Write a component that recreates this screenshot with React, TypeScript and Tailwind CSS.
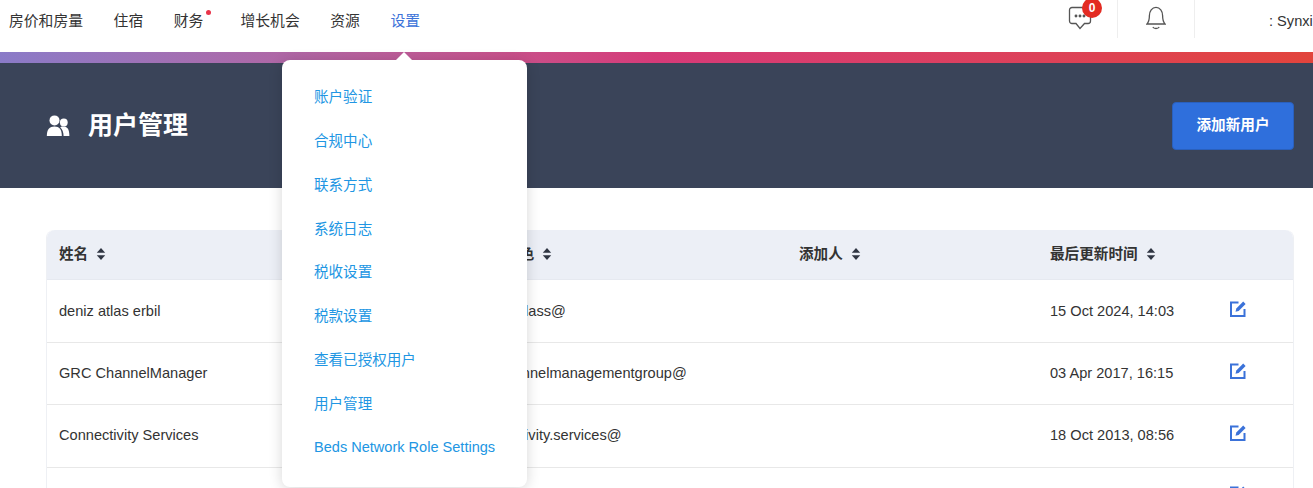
import React from "react";

const font = { fontFamily: '"Liberation Sans", "Noto Sans CJK SC", sans-serif' };

const Sort = () => (
  <svg width="10" height="14" viewBox="0 0 10 14" className="shrink-0 text-[#2f3542]" fill="currentColor">
    <path d="M5 1 L9.2 5.8 H0.8 Z" />
    <path d="M5 13 L9.2 8.2 H0.8 Z" />
  </svg>
);

const Edit = () => (
  <svg width="18" height="18" viewBox="0 0 18 18" fill="none" className="text-[#3b72d9]">
    <path d="M9.5 2.5 H2 V16 H15.5 V9" stroke="currentColor" strokeWidth="2" />
    <path d="M6.5 11.8 L7.3 8.6 L14.2 1.6 L16.6 4 L9.6 11 Z" fill="currentColor" />
  </svg>
);

const Users = () => (
  <svg width="24" height="24" viewBox="0 0 24 24" fill="white">
    <circle cx="8.5" cy="6.4" r="5" />
    <path d="M0.8 22 C0.8 15 3.6 12.4 8.5 12.4 C13.4 12.4 15.8 15 15.8 22 Z" />
    <circle cx="17.8" cy="8.4" r="3.9" />
    <path d="M14.2 13.2 C15.2 12.7 16.4 12.6 17.6 12.6 C21 12.6 23.4 15 23.4 22 H17.6 C17.6 18.4 16.4 15.2 14.2 13.2 Z" />
  </svg>
);

const Chat = () => (
  <svg width="24" height="26" viewBox="0 0 24 26" fill="none" stroke="#555" strokeWidth="1.3">
    <path d="M4 2.5 H20 A2.5 2.5 0 0 1 22.5 5 V16 A2.5 2.5 0 0 1 20 18.5 H16.5 L12 23.5 L8 18.5 H4 A2.5 2.5 0 0 1 1.5 16 V5 A2.5 2.5 0 0 1 4 2.5 Z" />
    <circle cx="8" cy="11" r="0.8" fill="#555" />
    <circle cx="12" cy="11" r="0.8" fill="#555" />
    <circle cx="16" cy="11" r="0.8" fill="#555" />
  </svg>
);

const Bell = () => (
  <svg width="20" height="24" viewBox="0 0 20 24" fill="none" stroke="#555" strokeWidth="1.3">
    <path d="M1 18 C3 16 3.4 14 3.4 9.6 C3.4 5 6 1.4 10 1.4 C14 1.4 16.6 5 16.6 9.6 C16.6 14 17 16 19 18 Z" />
    <path d="M6.8 21 C8 23 12 23 13.2 21" />
  </svg>
);

const navItems = ["房价和房量", "住宿", "财务", "增长机会", "资源", "设置"];
const menu = [
  "账户验证",
  "合规中心",
  "联系方式",
  "系统日志",
  "税收设置",
  "税款设置",
  "查看已授权用户",
  "用户管理",
  "Beds Network Role Settings",
];
const rows = [
  ["deniz atlas erbil", "denizatlass@", "15 Oct 2024, 14:03", "h-[63px]", "pt-[2px]", "pl-[15px]", "-mt-[4px]"],
  ["GRC ChannelManager", "grcchannelmanagementgroup@", "03 Apr 2017, 16:15", "h-[62px]", "", "pl-[15px]", "-mt-[6px]"],
  ["Connectivity Services", "connectivity.services@", "18 Oct 2013, 08:56", "h-[63px]", "", "pl-[11px]", "-mt-[6px]"],
  ["", "", "", "h-[62px]", "", "", "-mt-[10px]"],
];

export default function App() {
  return (
    <div style={font} className="relative h-[488px] w-[1313px] overflow-hidden bg-white text-[14.6px] text-[#333]">
      <header className="flex h-[52px] items-center bg-white">
        <nav className="flex items-center gap-[30.6px] pb-[10px] pl-[9px] text-[14.8px]">
          {navItems.map((n, i) => (
            <span key={n} className={`relative ${i === 5 ? "text-[#3b72d9]" : ""} ${i === 2 ? "mr-[6.5px]" : ""}`}>
              {n}
              {i === 2 && <span className="absolute -right-[8px] top-0 h-[5px] w-[5px] rounded-full bg-[#e9344a]" />}
            </span>
          ))}
        </nav>
        <div className="ml-auto flex h-full items-start">
          <div className="relative mt-[5px] mr-[25px]">
            <Chat />
            <span className="absolute -right-[10px] -top-[7px] flex h-[20px] w-[20px] items-center justify-center rounded-full bg-[#e32b22] text-[12px] font-bold text-white">
              0
            </span>
          </div>
          <div className="h-[38px] w-px bg-[#eeeeee]" />
          <div className="mt-[6px] mx-[28px]">
            <Bell />
          </div>
          <div className="h-[38px] w-px bg-[#eeeeee]" />
          <span className="mt-[12px] ml-[74px] w-[44px] whitespace-nowrap leading-[18px]">: Synxi</span>
        </div>
      </header>

      <div className="h-[11px] bg-gradient-to-r from-[#8a7bc8] via-[#d63a78] to-[#e2443c]" />

      <section className="flex h-[125px] items-center justify-between bg-[#3a4459] pl-[46px] pr-[19px] text-white">
        <div className="flex items-center gap-[18px]">
          <Users />
          <h1 className="text-[25px] font-bold">用户管理</h1>
        </div>
        <button className="h-[48px] w-[122px] rounded-[4px] border border-[#2a60bd] bg-[#2f6fdc] text-[14.6px] font-bold text-white">
          添加新用户
        </button>
      </section>

      <main className="px-[19px] pl-[46px] pt-[42px]">
        <table className="w-full table-fixed border-separate border-spacing-0 rounded-t-[8px] border-x border-[#eef0f4]">
          <colgroup>
            <col className="w-[416px]" />
            <col className="w-[323px]" />
            <col className="w-[251px]" />
            <col className="w-[179px]" />
            <col />
          </colgroup>
          <thead>
            <tr className="h-[50px] text-left font-bold">
              {["姓名", "用户角色", "添加人", "最后更新时间"].map((h, i) => (
                <th
                  key={h}
                  className={`bg-[#eceff6] border-b border-[#e6e9f0] font-bold text-[#333] ${i === 0 ? "rounded-tl-[8px] pl-[12px]" : "pl-[13px]"}`}
                >
                  <span className="flex items-center gap-[8px]">
                    {h}
                    <Sort />
                  </span>
                </th>
              ))}
              <th className="rounded-tr-[8px] border-b border-[#e6e9f0] bg-[#eceff6]" />
            </tr>
          </thead>
          <tbody>
            {rows.map((r, i) => (
              <tr key={i} className={r[3]}>
                <td className={`border-b border-[#e8e8e8] pl-[12px] ${r[4]}`}>{r[0]}</td>
                <td className={`border-b border-[#e8e8e8] ${r[5]} ${r[4]}`}>{r[1]}</td>
                <td className="border-b border-[#e8e8e8]" />
                <td className={`border-b border-[#e8e8e8] pl-[13px] ${r[4]}`}>{r[2]}</td>
                <td className="border-b border-[#e8e8e8] pl-[13px]">
                  <span className={`block ${r[6]}`}>
                    <Edit />
                  </span>
                </td>
              </tr>
            ))}
          </tbody>
        </table>
      </main>

      <div className="absolute left-[282px] top-[60px] z-10 flex h-[427px] w-[245px] flex-col rounded-[8px] bg-white pl-[32px] pt-[16.5px] text-[14.56px] text-[#2196e3] shadow-[0_2px_14px_rgba(0,0,0,0.16)]">
        <span className="absolute -top-[8px] left-[114px] h-0 w-0 border-x-[8px] border-b-[8px] border-x-transparent border-b-white" />
        {menu.map((m) => (
          <a key={m} className="flex h-[43.75px] items-center whitespace-nowrap">
            {m}
          </a>
        ))}
      </div>
    </div>
  );
}
